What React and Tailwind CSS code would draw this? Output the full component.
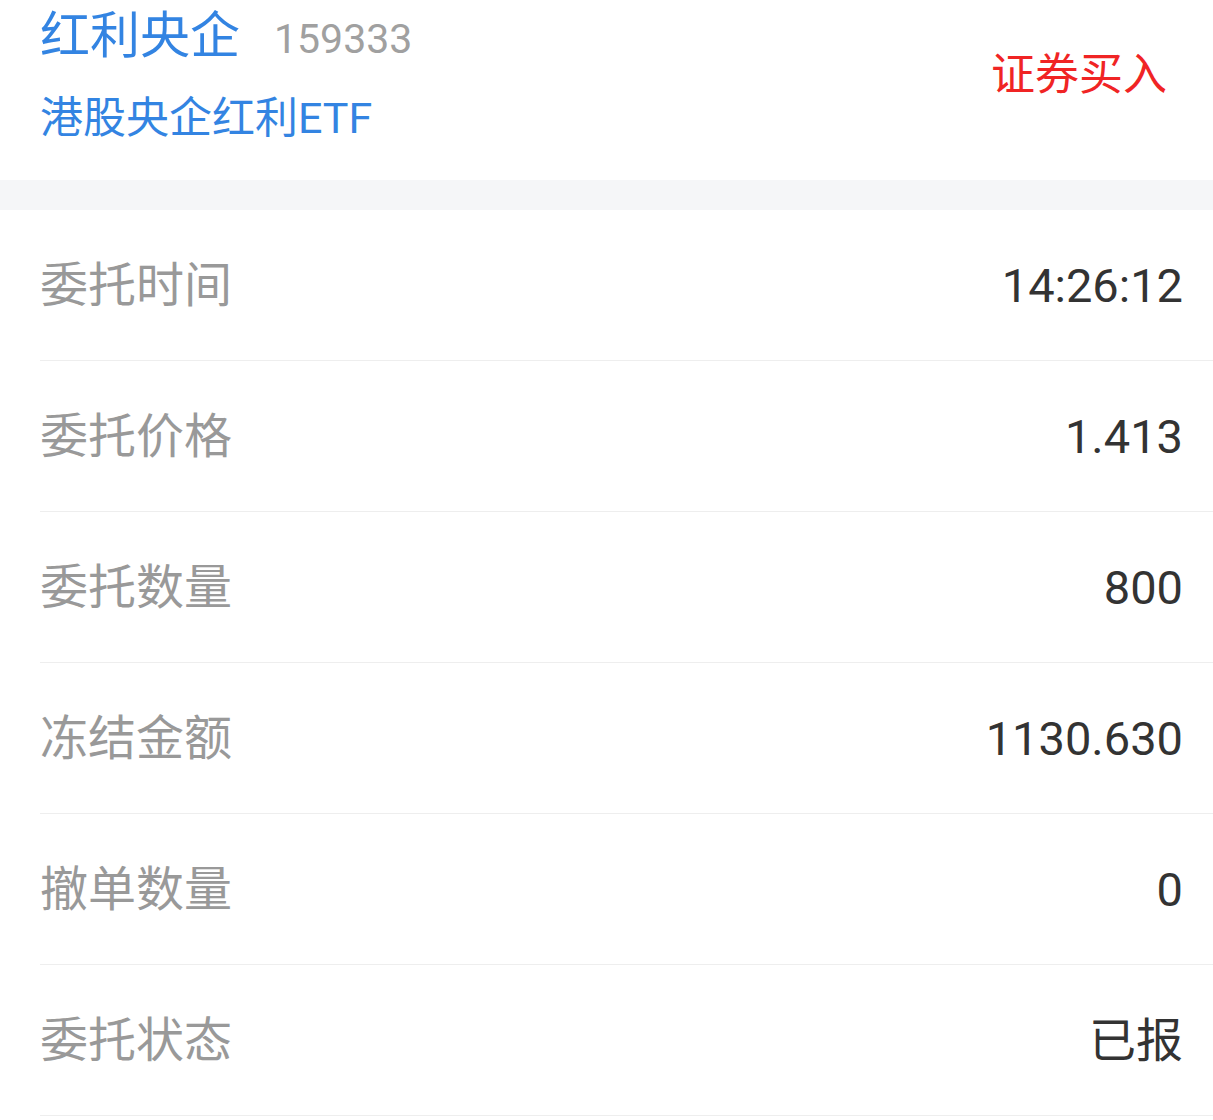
import React from 'react';

const rows = [
  { label: '委托时间', value: '14:26:12' },
  { label: '委托价格', value: '1.413' },
  { label: '委托数量', value: '800' },
  { label: '冻结金额', value: '1130.630' },
  { label: '撤单数量', value: '0' },
  { label: '委托状态', value: '已报' },
];

const font = { fontFamily: 'Roboto, "Noto Sans CJK SC", sans-serif' };

const App = () => {
  return (
    <div className="min-h-screen bg-white" style={font}>
      {/* Header */}
      <div className="h-[180px] pb-[30px] pl-[40px] pr-[46px] flex items-center justify-between">
        <div className="flex flex-col gap-[22px]">
          <div className="flex items-baseline h-[64px] leading-[64px]">
            <span className="text-[50px] text-[#3384e2]">红利央企</span>
            <span className="text-[41px] text-[#a0a0a0] ml-[34px]">159333</span>
          </div>
          <div className="h-[56px] leading-[56px] text-[43px] text-[#3384e2]">港股央企红利ETF</div>
        </div>
        <div className="text-[44px] text-[#f02424]">证券买入</div>
      </div>

      {/* Divider band */}
      <div className="h-[30px] bg-[#f5f6f8]" />

      {/* Detail rows */}
      <div className="pl-[40px]">
        {rows.map((row) => (
          <div
            key={row.label}
            className="h-[151px] flex items-center justify-between pr-[30px] border-b border-[#eeeeee]"
          >
            <span className="text-[48px] text-[#999999] pt-[2px]">{row.label}</span>
            <span className="text-[47px] text-[#333333] pt-[2px]">{row.value}</span>
          </div>
        ))}
      </div>
    </div>
  );
};

export default App;
